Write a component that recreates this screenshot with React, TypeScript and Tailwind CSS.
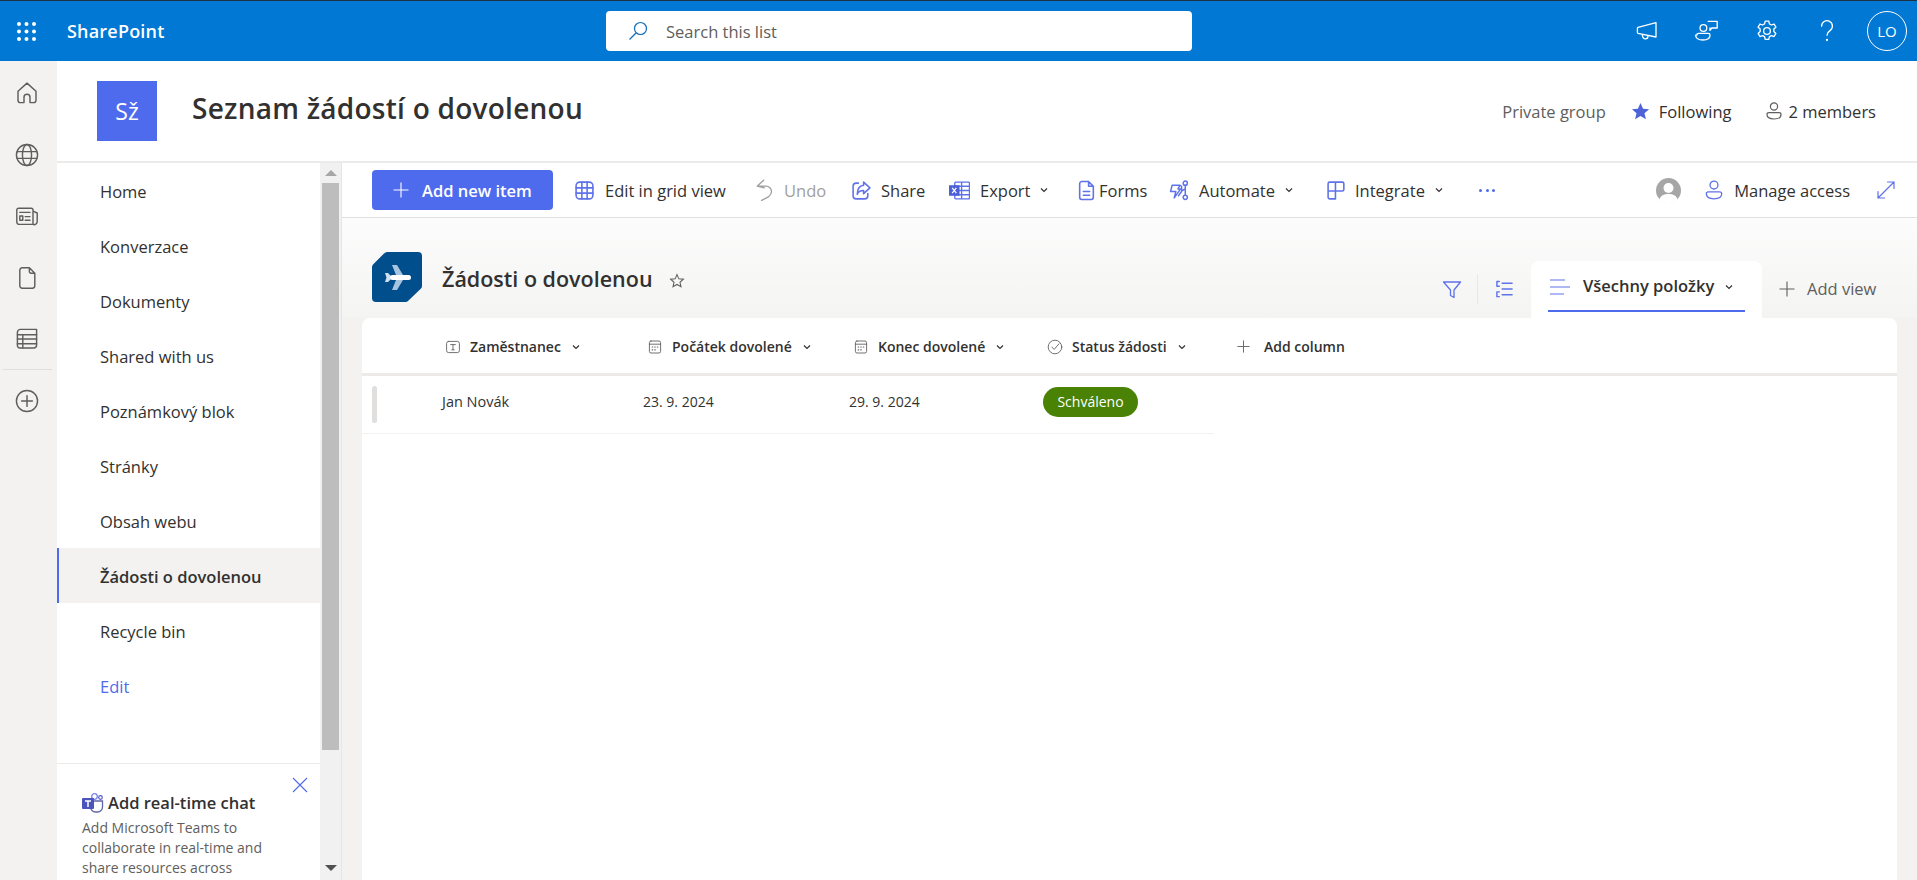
import React from "react";

const blue = "#5f72ea";

const Svg = ({ size = 20, color = blue, sw = 1.5, children }: { size?: number; color?: string; sw?: number; children: React.ReactNode }) => (
  <svg width={size} height={size} viewBox="0 0 20 20" fill="none" stroke={color} strokeWidth={sw} strokeLinecap="round" strokeLinejoin="round" className="shrink-0">
    {children}
  </svg>
);

const Chevron = ({ color = "#323130" }: { color?: string }) => (
  <svg width="10" height="10" viewBox="0 0 10 10" fill="none" stroke={color} strokeWidth="1.2" className="shrink-0">
    <path d="M2 3.5 5 6.5 8 3.5" />
  </svg>
);

const Plus = ({ size = 16, color = "#fff" }: { size?: number; color?: string }) => (
  <svg width={size} height={size} viewBox="0 0 16 16" stroke={color} strokeWidth="1.1" className="shrink-0">
    <path d="M8 0.5V15.5M0.5 8H15.5" />
  </svg>
);

const PersonIcon = ({ color, size = 20 }: { color: string; size?: number }) => (
  <Svg color={color} size={size} sw={1.2}>
    <circle cx="10" cy="5.5" r="3.6" />
    <path d="M3 13.5c0-1 1-1.8 2-1.8h10c1 0 2 .8 2 1.8 0 3-3 4.5-7 4.5s-7-1.5-7-4.5z" />
  </Svg>
);

const Calendar = () => (
  <Svg size={16} color="#605e5c" sw={1.1}>
    <rect x="3" y="2.5" width="14" height="15" rx="2" />
    <path d="M3 6.5h14" />
    <path d="M6.5 10h.6M9.7 10h.6M12.9 10h.6M6.5 13.5h.6M9.7 13.5h.6" strokeWidth="1.5" />
  </Svg>
);

const railIcons = [
  <path key="h" d="M7.5 18V13.5a2.5 2.5 0 0 1 5 0V18h3a2 2 0 0 0 2-2V8.5L10 1.8 2.5 8.5V16a2 2 0 0 0 2 2z" />,
  <g key="g"><circle cx="10" cy="10" r="8.8" /><ellipse cx="10" cy="10" rx="3.8" ry="8.8" /><path d="M1.8 7.2h16.4M1.8 12.8h16.4" /></g>,
  <g key="n"><path d="M15 17H3.5A2 2 0 0 1 1.5 15V5A1.5 1.5 0 0 1 3 3.5h10.5A1.5 1.5 0 0 1 15 5V17a2.5 2.5 0 0 0 3.5-2.2V7.5L15 6" /><path d="M4 7h8.5M8.5 10.5h4M8.5 13.5h4" /><rect x="4" y="10" width="2.5" height="3.5" /></g>,
  <path key="d" d="M4 3.5A2 2 0 0 1 6 1.5h6l4.5 4.5V16.5a2 2 0 0 1-2 2H6a2 2 0 0 1-2-2zM12 1.5V5A1.5 1.5 0 0 0 13.5 6h3" />,
  <g key="l"><path d="M2 4.5A2.5 2.5 0 0 1 4.5 2H18V15A2.5 2.5 0 0 1 15.500 17.500H4a2 2 0 0 1-2-2z" /><path d="M2 6.500h16M2 10h16M2 14h16M6.500 6.500V17.500" /></g>,
];

const navItems = ["Home", "Konverzace", "Dokumenty", "Shared with us", "Poznámkový blok", "Stránky", "Obsah webu"];

const ToolItem = ({ className, gap, icon, label, chevron, muted }: { className: string; gap: string; icon: React.ReactNode; label: string; chevron?: boolean; muted?: boolean }) => (
  <div className={`flex items-center ${className}`}>
    <div className={`flex items-center ${gap}`}>{icon}</div>
    <span className={`pt-[2px] ${muted ? "text-[#a19f9d]" : "text-[#323130]"}`}>{label}</span>
    {chevron && <span className="ml-[9px]"><Chevron /></span>}
  </div>
);

const HeaderCell = ({ className, icon, label }: { className: string; icon: React.ReactNode; label: string }) => (
  <div className={`flex items-center ${className}`}>
    <span className="mr-[9px]">{icon}</span>
    <span>{label}</span>
    <span className="ml-[10px]"><Chevron /></span>
  </div>
);

export default function App() {
  return (
    <div className="h-[880px] w-full overflow-hidden flex flex-col bg-white text-[#323130] font-['Open_Sans','Noto_Sans',sans-serif]">
      {/* suite bar */}
      <header className="relative h-[61px] shrink-0 bg-[#0078d4] border-t border-[#1c3144] flex items-center text-white">
        <div className="w-[67px] pl-[17px] shrink-0">
          <svg width="19" height="19" viewBox="0 0 19 19" fill="#fff">
            {[2, 9.5, 17].map((y) => [2, 9.5, 17].map((x) => <circle key={`${x}-${y}`} cx={x} cy={y} r="2" />))}
          </svg>
        </div>
        <span className="w-[539px] text-[18px] font-semibold tracking-[0.2px]">SharePoint</span>
        <div className="w-[586px] h-[40px] bg-white rounded flex items-center pl-[22px] text-[#605e5c] text-[16.5px]">
          <svg width="20" height="20" viewBox="0 0 20 20" fill="none" stroke="#0f6cbd" strokeWidth="1.2" className="mr-[18px]">
            <circle cx="12.5" cy="7.5" r="6" /><path d="M8 12 1.5 18.5" />
          </svg>
          <span className="pt-[2px]">Search this list</span>
        </div>
        <div className="ml-auto flex items-center pr-[10px]">
          <div className="w-[60px] flex justify-center">
            <Svg color="#fff" size={24} sw={1.1}>
              <path d="M17.5 3v12L2.5 12a1 1 0 0 1-.5-1V8a1 1 0 0 1 .5-1zM6 13l.5 2a2.2 2.2 0 0 0 4.3-.5l.2-.8" />
            </Svg>
          </div>
          <div className="w-[60px] flex justify-center">
            <Svg color="#fff" size={24} sw={1.1}>
              <circle cx="7" cy="7.5" r="2.8" /><path d="M1.5 13.5c0-.8.7-1.5 1.500-1.500h8c.8 0 1.500.7 1.500 1.500 0 2.500-2.500 4-6 4s-6-1.500-6-4zM11 2h7.500v5.500H14l-1.500 2V7.500" />
            </Svg>
          </div>
          <div className="w-[60px] flex justify-center">
            <Svg color="#fff" size={24} sw={1.1}>
              <circle cx="10" cy="10" r="2.8" />
              <path d="M8.5 1.8h3l.5 2.3 1.7.9 2.2-.8 1.5 2.6-1.7 1.6v2l1.7 1.6-1.5 2.6-2.2-.8-1.7.9-.5 2.3h-3l-.5-2.3-1.7-.9-2.2.8-1.5-2.6 1.7-1.6v-2L2.6 6.8l1.5-2.6 2.2.8 1.7-.9z" />
            </Svg>
          </div>
          <div className="w-[60px] mr-[10px] flex justify-center">
            <Svg color="#fff" size={24} sw={1.1}>
              <path d="M5.5 6a4.5 4.5 0 1 1 7 3.7c-1.5 1-2.5 1.8-2.5 3.8" /><circle cx="10" cy="17.5" r=".4" />
            </Svg>
          </div>
          <div className="w-[40px] h-[40px] rounded-full border border-white flex items-center justify-center text-[15px]">LO</div>
        </div>
      </header>

      <div className="flex-1 flex min-h-0">
        {/* app rail */}
        <nav className="w-[57px] shrink-0 bg-[#f3f2f1] flex flex-col items-center pt-[20px] pr-[4px]">
          {railIcons.map((icon, i) => (
            <div key={i} className="h-[61.5px] w-full flex justify-center">
              <Svg size={24} color="#605e5c" sw={1.2}>{icon}</Svg>
            </div>
          ))}
          <div className="w-[50px] border-t border-[#e1dfdd] mt-[-20px] mb-[19px]" />
          <Svg size={24} color="#605e5c" sw={1.2}><circle cx="10" cy="10" r="8.8" /><path d="M10 5.5v9M5.5 10h9" /></Svg>
        </nav>

        <div className="flex-1 flex flex-col min-w-0">
          {/* site header */}
          <div className="h-[102px] shrink-0 border-b-2 border-[#edebe9] flex items-start pl-[40px] pr-[41px]">
            <div className="mt-[20px] w-[60px] h-[60px] bg-[#4f6bed] text-white text-[23px] flex items-center justify-center">Sž</div>
            <h1 className="ml-[35px] mt-[27px] text-[28px] leading-[40px] font-semibold tracking-[0.25px] text-[#323130]">Seznam žádostí o dovolenou</h1>
            <div className="ml-auto mt-[39px] flex items-center text-[16.5px] leading-[24px]">
              <span className="text-[#605e5c] mr-[25px]">Private group</span>
              <svg width="19" height="19" viewBox="0 0 20 20" fill="#4f63d8" className="mr-[9px] mt-[-2px]">
                <path d="M10 1l2.700 6 6.300.6-4.800 4.200 1.500 6.300L10 14.800 4.300 18.100l1.500-6.300L1 7.600 7.300 7z" />
              </svg>
              <span className="mr-[33px]">Following</span>
              <span className="mr-[4px] mt-[-2px]"><PersonIcon color="#605e5c" /></span>
              <span>2 members</span>
            </div>
          </div>

          <div className="flex-1 flex min-h-0">
            {/* left nav */}
            <div className="w-[263px] shrink-0 flex flex-col">
              <div className="flex-1 text-[16.5px]">
                {navItems.map((item) => (
                  <div key={item} className="h-[55px] flex items-center pl-[43px] pt-[4px]">{item}</div>
                ))}
                <div className="h-[55px] flex items-center pl-[41px] pt-[4px] border-l-2 border-[#4f6bed] bg-[#f3f2f1] font-semibold">Žádosti o dovolenou</div>
                <div className="h-[55px] flex items-center pl-[43px] pt-[4px]">Recycle bin</div>
                <div className="h-[55px] flex items-center pl-[43px] pt-[4px] text-[#4f6bed]">Edit</div>
              </div>
              <div className="relative h-[117px] shrink-0 border-t border-[#edebe9] pl-[25px] pt-[27px]">
                <svg width="16" height="16" viewBox="0 0 16 16" stroke="#4f6bed" strokeWidth="1.1" className="absolute left-[235px] top-[13px]">
                  <path d="M1 1l14 14M15 1 1 15" />
                </svg>
                <div className="flex items-center h-[24px]">
                  <svg width="22" height="20" viewBox="0 0 22 20" className="mr-[4px] shrink-0">
                    <circle cx="12.5" cy="3.5" r="2.8" fill="none" stroke="#7b83eb" strokeWidth="1.3" />
                    <circle cx="18.5" cy="4.5" r="1.8" fill="none" stroke="#5059c9" strokeWidth="1.2" />
                    <path d="M8 8h12.5v6a5 5 0 0 1-5 5h-2a5 5 0 0 1-5-5z" fill="none" stroke="#6264a7" strokeWidth="1.3" />
                    <rect x="0" y="5" width="12" height="11" rx="1" fill="#4b53bc" />
                    <path d="M3 8h6M6 8v6" stroke="#fff" strokeWidth="1.5" />
                  </svg>
                  <span className="text-[16.5px] font-semibold whitespace-nowrap">Add real-time chat</span>
                </div>
                <p className="mt-[3px] text-[14px] leading-[20px] text-[#605e5c]">Add Microsoft Teams to<br />collaborate in real-time and<br />share resources across</p>
              </div>
            </div>

            {/* nav scrollbar */}
            <div className="w-[22px] shrink-0 bg-[#f1f1f1] border-r border-[#e6e6e6] flex flex-col items-center relative">
              <div className="h-[20px] flex items-center justify-center">
                <div className="border-x-[6px] border-x-transparent border-b-[6px] border-b-[#a6a6a6]" />
              </div>
              <div className="w-[17px] h-[567px] bg-[#bdbdbd]" />
              <div className="mt-auto mb-[9px] border-x-[6px] border-x-transparent border-t-[6px] border-t-[#505050]" />
            </div>

            {/* list area */}
            <div className="flex-1 min-w-0 flex flex-col">
              <div className="h-[55px] shrink-0 border-b border-[#e1dfdd] flex items-center pl-[30px] pr-[21px] text-[16.5px]">
                <button className="w-[181px] h-[40px] rounded bg-[#4f6bed] text-white flex items-center pl-[21px] mr-[21px]">
                  <Plus />
                  <span className="ml-[13px] pt-[2px] text-[16.5px] font-semibold whitespace-nowrap">Add new item</span>
                </button>
                <ToolItem className="w-[181px]" gap="w-[31px]" label="Edit in grid view" icon={
                  <Svg size={21}><rect x="2" y="2" width="16" height="16" rx="3.5" /><path d="M2 7.5h16M2 12.5h16M7.5 2v16M12.5 2v16" /></Svg>
                } />
                <ToolItem className="w-[96px]" gap="w-[29px]" label="Undo" muted icon={
                  <Svg size={22} color="#a19f9d" sw={1.2}><path d="M8 1 2 6.5l6.5 1.5M2 6.5h8a5 5 0 0 1 5 5c0 2-1 3-2.5 4.5L6 19.5" /></Svg>
                } />
                <ToolItem className="w-[98px]" gap="w-[30px]" label="Share" icon={
                  <Svg size={21}><path d="M7 3H5a3 3 0 0 0-3 3v9a3 3 0 0 0 3 3h8a3 3 0 0 0 3-3v-2" /><path d="M12 2l6 5.5-6 5.5V10c-3 0-5 1-6 3.5C6 9 8 5.5 12 5z" /></Svg>
                } />
                <ToolItem className="w-[127px]" gap="w-[31px]" label="Export" chevron icon={
                  <svg width="21" height="21" viewBox="0 0 20 20" fill="none" className="shrink-0">
                    <rect x="5.5" y="2" width="14" height="16" rx="1" stroke={blue} strokeWidth="1.3" />
                    <path d="M5.5 6h14M5.5 10h14M5.5 14h14M12 2v16" stroke={blue} strokeWidth="1.3" />
                    <rect x="0" y="5" width="10" height="10" fill="#4b5fd6" />
                    <path d="M3 7.5l4 5M7 7.5l-4 5" stroke="#fff" strokeWidth="1.2" />
                  </svg>
                } />
                <ToolItem className="w-[93px]" gap="w-[23px]" label="Forms" icon={
                  <Svg size={21}><path d="M3.5 3.5A2 2 0 0 1 5.5 1.5H12l4.5 4.5v10.5a2 2 0 0 1-2 2h-9a2 2 0 0 1-2-2zM12 1.5V6h4.5M7 11h6M7 14.5h6" /></Svg>
                } />
                <ToolItem className="w-[157px]" gap="w-[30px]" label="Automate" chevron icon={
                  <Svg size={21} sw={1.4}><path d="M3 5h7.5L8.5 8.5H11L5 17l1.500-6H1.500zM10.500 5l1.500 1v5l-3 4" /><circle cx="15.500" cy="3" r="2" /><circle cx="15.500" cy="16.500" r="2" /><path d="M15.500 5v9.500M15.500 8.500 12.500 10" /></Svg>
                } />
                <ToolItem className="w-[150px]" gap="w-[29px]" label="Integrate" chevron icon={
                  <Svg size={21}><path d="M2 3.5A1.5 1.5 0 0 1 3.5 2h12A1.5 1.5 0 0 1 17 3.5V9a1.5 1.5 0 0 1-1.5 1.5H9V18H3.5A1.5 1.5 0 0 1 2 16.5zM2 10.5h7M9 2v8.5" /></Svg>
                } />
                <div className="flex gap-[3.5px] ml-[3px]">
                  <i className="w-[3px] h-[3px] rounded-full bg-[#4f6bed]" /><i className="w-[3px] h-[3px] rounded-full bg-[#4f6bed]" /><i className="w-[3px] h-[3px] rounded-full bg-[#4f6bed]" />
                </div>
                <div className="ml-auto flex items-center">
                  <svg width="25" height="25" viewBox="0 0 25 25" className="mr-[22px]">
                    <circle cx="12.5" cy="12.5" r="12.5" fill="#a6a6a6" />
                    <circle cx="12.5" cy="10" r="5" fill="#fff" />
                    <path d="M3.5 21.5c1-4 4.5-5.5 9-5.5s8 1.5 9 5.500a12.500 12.500 0 0 1-18 0z" fill="#fff" />
                  </svg>
                  <span className="mr-[9px]"><PersonIcon color={blue} size={22} /></span>
                  <span className="mr-[26px] pt-[2px]">Manage access</span>
                  <Svg size={20} sw={1.2}><path d="M11.5 2H18v6.5M18 2 2 18M2 11.5V18h6.5" /></Svg>
                </div>
              </div>

              <div className="flex-1 min-h-0 flex flex-col px-[20px] bg-[#f3f2f1]">
                <div className="h-[100px] shrink-0 -mx-[20px] pl-[30px] pr-[20px] flex items-start bg-linear-to-b from-[#fcfcfc] to-[#f4f4f3]">
                  <svg width="50" height="50" viewBox="0 0 50 50" className="mt-[34px] shrink-0">
                    <path d="M12 1.5Q13.5 0 15 0h31a4 4 0 0 1 4 4v30q0 1.5-1 2.5L36.5 48.5Q35 50 33.5 50H4a4 4 0 0 1-4-4V15q0-1.5 1-2.500z" fill="#004e8c" />
                    <path d="M20 13h5l6 10h-7zM24 28h7l-6 10h-5z" fill="#a6c4e0" />
                    <path d="M13 21h3l3 3v3l-3 3h-3l1.5-4.500z" fill="#cfe0f0" />
                    <rect x="18" y="23" width="21" height="5" rx="2.5" fill="#fff" />
                  </svg>
                  <span className="ml-[20px] mt-[46px] text-[21.5px] leading-[30px] font-semibold">Žádosti o dovolenou</span>
                  <svg width="16" height="16" viewBox="0 0 20 20" fill="none" stroke="#605e5c" strokeWidth="1.3" className="ml-[16px] mt-[55px]">
                    <path d="M10 2l2.300 5.300 5.700.5-4.300 3.800 1.300 5.600L10 14.300l-5 2.900 1.300-5.600L2 7.800l5.700-.5z" />
                  </svg>
                  <div className="ml-auto flex items-start">
                    <div className="mt-[62px]">
                      <Svg size={20} sw={1.3}><path d="M1.5 2h17L12 10v7.5l-3.500-2V10z" /></Svg>
                    </div>
                    <div className="w-px h-[30px] bg-[#e8e8e8] mt-[56px] ml-[15px] mr-[17px]" />
                    <div className="mt-[62px] mr-[17px]">
                      <Svg size={19}><path d="M7.5 3.5H18M7.5 9.5H18M7.5 15.5H18M4.5 1.5H2v5h2.500M4.500 12.500H2v5h2.500" /></Svg>
                    </div>
                    <div className="mt-[43px] h-[57px] w-[231px] bg-white rounded-t-lg px-[17px] relative">
                      <div className="h-[51px] pt-[2px] border-b-2 border-[#4f6bed] flex items-center text-[16.5px] font-semibold">
                        <svg width="20" height="16" viewBox="0 0 20 16" stroke={blue} strokeWidth="1.2" className="ml-[2px] mr-[13px] shrink-0">
                          <path d="M0 1h15M0 8h20M0 15h14" />
                        </svg>
                        Všechny položky
                        <span className="ml-[10px]"><Chevron /></span>
                      </div>
                    </div>
                    <div className="mt-[59px] ml-[17px] flex items-center text-[16.5px] text-[#605e5c] w-[118px]">
                      <Plus color="#605e5c" />
                      <span className="ml-[12px] whitespace-nowrap">Add view</span>
                    </div>
                  </div>
                </div>

                {/* list card */}
                <div className="flex-1 bg-white rounded-t-lg">
                  <div className="h-[58px] pt-[2px] border-b-[3px] border-[#edebe9] flex items-center pl-[83px] text-[14px] font-semibold">
                    <HeaderCell className="w-[202px]" label="Zaměstnanec" icon={
                      <Svg size={16} color="#605e5c" sw={1.1}><rect x="2" y="3" width="16" height="14" rx="2.5" /><path d="M7 7h6M10 7v6.5M8.5 13.5h3" /></Svg>
                    } />
                    <HeaderCell className="w-[206px]" label="Počátek dovolené" icon={<Calendar />} />
                    <HeaderCell className="w-[194px]" label="Konec dovolené" icon={<Calendar />} />
                    <HeaderCell className="w-[190px]" label="Status žádosti" icon={
                      <Svg size={16} color="#605e5c" sw={1.1}><circle cx="10" cy="10" r="8.5" /><path d="M6 10l3 3 6-7" /></Svg>
                    } />
                    <Plus size={13} color="#605e5c" />
                    <span className="ml-[14px]">Add column</span>
                  </div>
                  <div className="h-[58px] w-[852px] border-b border-[#f3f2f1] flex items-center pb-[6px] text-[14px]">
                    <div className="ml-[10px] w-[5px] h-[37px] mt-[5px] rounded-sm bg-[#e1dfdd]" />
                    <div className="ml-[65px] w-[201px] text-[14.5px]">Jan Novák</div>
                    <div className="w-[206px]">23. 9. 2024</div>
                    <div className="w-[194px]">29. 9. 2024</div>
                    <div className="w-[95px] h-[30px] rounded-full bg-[#498205] text-white flex items-center justify-center">Schváleno</div>
                  </div>
                </div>
              </div>
            </div>
          </div>
        </div>
      </div>
    </div>
  );
}
